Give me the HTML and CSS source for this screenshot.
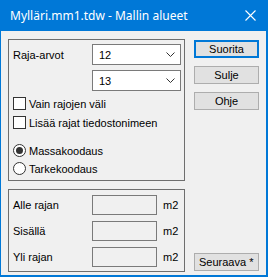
FILE: index.html
```html
<!DOCTYPE html>
<html lang="fi">
  <head>
    <meta charset="UTF-8" />
    <title>Mylläri.mm1.tdw - Mallin alueet</title>
    <link rel="stylesheet" href="styles.css">
  </head>
  <body>
    <div class="window">
      <div class="titlebar">
        <span class="title">Mylläri.mm1.tdw - Mallin alueet</span>
        <svg class="close" width="11" height="11" viewBox="0 0 11 11">
          <path d="M0.5 0.5 L10.5 10.5 M10.5 0.5 L0.5 10.5" stroke="#fff" stroke-width="1.1" fill="none" />
        </svg>
      </div>

      <div class="client">
        <div class="left">
          <div class="group group-top">
            <div class="limit-row">
              <span class="label">Raja-arvot</span>
              <div class="combo">
                <span>12</span>
                <svg width="9" height="5" viewBox="0 0 9 5"><polyline points="0.5,0.5 4.5,4.5 8.5,0.5" stroke="#333" fill="none" /></svg>
              </div>
            </div>
            <div class="limit-row second">
              <div class="combo">
                <span>13</span>
                <svg width="9" height="5" viewBox="0 0 9 5"><polyline points="0.5,0.5 4.5,4.5 8.5,0.5" stroke="#333" fill="none" /></svg>
              </div>
            </div>

            <label class="opt first-check"><span class="checkbox"></span>Vain rajojen väli</label>
            <label class="opt"><span class="checkbox"></span>Lisää rajat tiedostonimeen</label>

            <label class="opt first-radio"><span class="radio checked"></span>Massakoodaus</label>
            <label class="opt radio-row"><span class="radio"></span>Tarkekoodaus</label>
          </div>

          <div class="group group-bottom">
            <div class="area-row">
              <span class="label">Alle rajan</span>
              <span class="field"></span>
              <span class="unit">m2</span>
            </div>
            <div class="area-row">
              <span class="label">Sisällä</span>
              <span class="field"></span>
              <span class="unit">m2</span>
            </div>
            <div class="area-row">
              <span class="label">Yli rajan</span>
              <span class="field"></span>
              <span class="unit">m2</span>
            </div>
          </div>
        </div>

        <div class="right">
          <button class="btn default">Suorita</button>
          <button class="btn">Sulje</button>
          <button class="btn">Ohje</button>
          <button class="btn next">Seuraava *</button>
        </div>
      </div>
    </div>
  </body>
</html>
```

FILE: styles.css
```css
body {
  margin: 0;
  font-family: "Liberation Sans", Arial, sans-serif;
  font-size: 11px;
  color: #000;
}

.window {
  width: 268px;
  height: 277px;
  box-sizing: border-box;
  background: #0078d7;
  display: flex;
  flex-direction: column;
  padding: 0 2px 2px 1px;
}

.titlebar {
  height: 31px;
  display: flex;
  align-items: center;
  justify-content: space-between;
  padding: 0 10px 0 9px;
  color: #fff;
}

.title {
  font-family: "Noto Sans", "Open Sans", sans-serif;
  font-size: 12px;
}

.client {
  flex: 1;
  background: #f0f0f0;
  display: flex;
  padding: 8px 7px 0 7px;
}

.left {
  width: 177px;
  display: flex;
  flex-direction: column;
  gap: 8px;
}

.group {
  border: 1px solid #6e6e6e;
  box-sizing: border-box;
}

.group-top {
  height: 142px;
  padding: 4px 3px 0 4px;
}

.group-bottom {
  height: 83px;
  padding: 5px 0 0 4px;
}

.limit-row {
  display: flex;
  align-items: center;
  justify-content: space-between;
}

.limit-row.second {
  justify-content: flex-end;
  margin-top: 5px;
}

.combo {
  width: 89px;
  height: 21px;
  box-sizing: border-box;
  border: 1px solid #7a7a7a;
  background: #fff;
  display: flex;
  align-items: center;
  justify-content: space-between;
  padding: 0 5px 0 6px;
}

.opt {
  display: flex;
  align-items: center;
  gap: 3px;
  height: 13px;
  margin-top: 6px;
}

.first-radio {
  margin-top: 15px;
}

.radio-row {
  margin-top: 5px;
}

.checkbox {
  width: 13px;
  height: 13px;
  box-sizing: border-box;
  border: 1px solid #333;
  background: #fff;
}

.radio {
  width: 13px;
  height: 13px;
  box-sizing: border-box;
  border: 1px solid #333;
  border-radius: 50%;
  background: #fff;
  display: flex;
  align-items: center;
  justify-content: center;
}

.radio.checked::after {
  content: "";
  width: 7px;
  height: 7px;
  border-radius: 50%;
  background: #333;
}

.area-row {
  display: flex;
  align-items: center;
  height: 20px;
  margin-bottom: 6px;
}

.area-row .label {
  width: 79px;
}

.field {
  width: 65px;
  height: 20px;
  box-sizing: border-box;
  border: 1px solid #7a7a7a;
  background: #f0f0f0;
}

.unit {
  margin-left: 6px;
}

.right {
  margin-left: 9px;
  display: flex;
  flex-direction: column;
  padding-top: 1px;
}

.btn {
  width: 65px;
  height: 18px;
  box-sizing: border-box;
  border: 1px solid #adadad;
  background: #e1e1e1;
  font-family: "Liberation Sans", Arial, sans-serif;
  font-size: 11px;
  padding: 0;
  margin-bottom: 8px;
  color: #000;
  white-space: nowrap;
}

.btn.default {
  border: 2px solid #0078d7;
}

.btn.next {
  margin-top: auto;
  margin-bottom: 4px;
  text-align: left;
  padding-left: 4px;
}
```
